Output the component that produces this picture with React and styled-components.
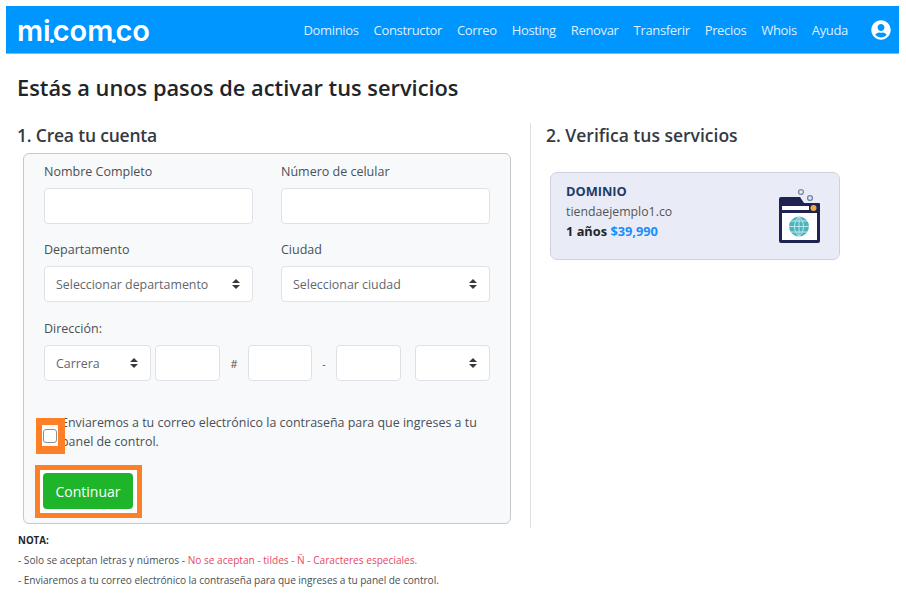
import React from 'react';
import styled, { createGlobalStyle } from 'styled-components';
import { FaUserCircle } from 'react-icons/fa';

const arrows = `url("data:image/svg+xml,%3csvg xmlns='http://www.w3.org/2000/svg' viewBox='0 0 4 5'%3e%3cpath fill='%23343a40' d='M2 0L0 2h4zm0 5L0 3h4z'/%3e%3c/svg%3e")`;

const GlobalStyle = createGlobalStyle`
html, body {
  margin:0;
  background:#fff;
  font-family:"Open Sans", "Noto Sans", sans-serif;
  color:#212529;
}
* { box-sizing:border-box; }
`;

const Page = styled.div`
width:906px;
height:603px;
padding:6px 7px 0 6px;
overflow:hidden;
`;

const NavBar = styled.nav`
height:48px;
background:#0096ff;
border-bottom:1px solid #6cc0ff;
display:flex;
align-items:center;
justify-content:space-between;
padding:0 8px 0 11px;
`;

const Logo = styled.div`
font-family:"Inter", sans-serif;
font-weight:600;
font-size:29px;
color:#fff;
line-height:1;
padding-top:1px;
`;

const LogoDot = styled.span`
display:inline-block;
width:4px;
height:4px;
margin:0 -1px;
border-radius:50%;
background:#fff;
vertical-align:-2px;
`;

const NavRight = styled.div`
display:flex;
align-items:center;
`;

const NavLink = styled.a`
color:rgba(255,255,255,0.88);
font-size:13px;
letter-spacing:-0.34px;
margin-right:15px;
`;

const UserIcon = styled(FaUserCircle)`
color:#fff;
font-size:20px;
margin-left:8px;
`;

const Title = styled.h1`
margin:21px 0 22px 11px;
font-size:21.8px;
line-height:26px;
font-weight:600;
`;

const Columns = styled.div`
display:flex;
margin-left:12px;
`;

const LeftColumn = styled.section`
width:513px;
padding:0 19px 4px 0;
border-right:1px solid #dee2e6;
`;

const RightColumn = styled.section`
flex:1;
padding-left:15px;
`;

const StepTitle = styled.h2`
margin:0 0 0 ${p => p.$shift || '0'};
font-size:17.5px;
letter-spacing:${p => p.$tight ? '-0.2px' : '0'};
line-height:24px;
font-weight:600;
color:#343a40;
`;

const FormCard = styled.form`
position:relative;
margin:6px 0 0 5px;
height:371px;
background:#f8f9fa;
border:1px solid #c8c8c8;
border-radius:6px;
padding:8px 21px 0 20px;
`;

const FieldGrid = styled.div`
display:grid;
grid-template-columns:209px 209px;
column-gap:28px;
row-gap:16px;
`;

const Field = styled.div`
display:flex;
flex-direction:column;
gap:7px;
`;

const Label = styled.label`
padding-top:1px;
font-size:12.5px;
line-height:18px;
color:#495057;
`;

const TextInput = styled.input`
width:${p => p.$width || '100%'};
height:36px;
border:1px solid #dee2e6;
border-radius:4px;
background:#fff;
padding:0 12px;
flex:none;
`;

const Select = styled.select`
appearance:none;
width:${p => p.$width || '100%'};
height:36px;
border:1px solid #dee2e6;
border-radius:4px;
padding:0 11px;
flex:none;
font-family:inherit;
font-size:12.4px;
color:#5f6770;
background:#fff ${arrows} no-repeat right 12px center / 8px 10px;
`;

const AddressBlock = styled.div`
display:flex;
flex-direction:column;
gap:7px;
margin-top:17px;
`;

const AddressRow = styled.div`
display:flex;
align-items:center;
`;

const Separator = styled.span`
width:${p => p.$width}px;
text-align:center;
font-size:11px;
color:#555;
flex:none;
`;

const Terms = styled.p`
margin:32px 0 0 17px;
width:425px;
font-size:12.45px;
line-height:19px;
color:#495057;
`;

const CheckboxMark = styled.span`
position:absolute;
left:12px;
top:264px;
width:29px;
height:36px;
display:flex;
align-items:center;
justify-content:center;
background:#fff;
border:solid #ff7f27;
border-width:7px 7px 8px 6px;
`;

const CheckBox = styled.input`
appearance:none;
margin:0;
width:14px;
height:14px;
border:1px solid #8f8f8f;
border-radius:3px;
background:#fff;
`;

const ButtonMark = styled.div`
width:107px;
margin:14px 0 0 -9px;
padding:3px 4px 4px 3px;
background:#fff;
border:5px solid #ff7f27;
`;

const ContinueButton = styled.button`
display:block;
width:90px;
height:36px;
border:none;
border-radius:4px;
background:#1eb52b;
color:#fff;
font-family:inherit;
font-size:14px;
`;

const ServiceCard = styled.div`
margin:25px 0 0 4px;
width:290px;
height:88px;
background:#e9ecf6;
border:1px solid #cfd2da;
border-radius:7px;
padding:8px 18px 0 15px;
display:flex;
justify-content:space-between;
`;

const ServiceInfo = styled.div`
display:flex;
flex-direction:column;
`;

const ServiceName = styled.strong`
font-size:12.8px;
line-height:20px;
color:#1f3a68;
`;

const ServiceDomain = styled.span`
font-size:12.3px;
line-height:21px;
color:#555;
`;

const ServicePrice = styled.span`
font-size:12.8px;
line-height:19px;
font-weight:700;
`;

const PriceValue = styled.span`
color:#1a8cff;
`;

const DomainGraphic = styled.svg`
margin-top:6px;
flex:none;
`;

const Notes = styled.div`
margin:5px 0 0 12px;
font-size:10.1px;
color:#495057;
`;

const NoteTitle = styled.div`
font-size:9.7px;
font-weight:700;
line-height:16px;
color:#212529;
`;

const NoteLine = styled.div`
line-height:20px;
margin-top:${p => p.$first ? '1px' : '0'};
letter-spacing:${p => p.$first ? '0' : '-0.05px'};
`;

const Warning = styled.span`
color:#e8475f;
`;

const links = ['Dominios', 'Constructor', 'Correo', 'Hosting', 'Renovar', 'Transferir', 'Precios', 'Whois', 'Ayuda'];

function DomainIcon() {
    return (
        <DomainGraphic width="42" height="57" viewBox="0 0 42 57">
            <circle cx="22" cy="5" r="2.4" fill="none" stroke="#7f8fb5" strokeWidth="1.4" />
            <circle cx="31" cy="11" r="2.4" fill="none" stroke="#6f83ad" strokeWidth="1.4" />
            <path d="M2 10h19l4 6h15a1 1 0 0 1 1 1v37a2 2 0 0 1-2 2H2a2 2 0 0 1-2-2V12a2 2 0 0 1 2-2z" fill="#1e2352" />
            <rect x="3" y="19" width="27" height="4" fill="#fff" />
            <circle cx="34.5" cy="21" r="3" fill="#f5a542" />
            <rect x="3" y="26" width="35" height="27" fill="#fff" />
            <circle cx="20" cy="39.5" r="10" fill="#4fb3bf" />
            <path d="M10 39.5h20M12 34h16M12 45h16M20 29.500v20M20 29.500c-6 6-6 14 0 20M20 29.500c6 6 6 14 0 20" fill="none" stroke="#c9eef0" strokeWidth="0.9" />
        </DomainGraphic>
    );
}

export default function App() {
    return (
        <Page>
            <GlobalStyle />
            <NavBar>
                <Logo>mi<LogoDot />com<LogoDot />co</Logo>
                <NavRight>
                    {links.map(l => <NavLink key={l}>{l}</NavLink>)}
                    <UserIcon />
                </NavRight>
            </NavBar>
            <Title>Estás a unos pasos de activar tus servicios</Title>
            <Columns>
                <LeftColumn>
                    <StepTitle $tight $shift="-1px">1. Crea tu cuenta</StepTitle>
                    <FormCard>
                        <FieldGrid>
                            <Field>
                                <Label>Nombre Completo</Label>
                                <TextInput />
                            </Field>
                            <Field>
                                <Label>Número de celular</Label>
                                <TextInput />
                            </Field>
                            <Field>
                                <Label>Departamento</Label>
                                <Select><option>Seleccionar departamento</option></Select>
                            </Field>
                            <Field>
                                <Label>Ciudad</Label>
                                <Select><option>Seleccionar ciudad</option></Select>
                            </Field>
                        </FieldGrid>
                        <AddressBlock>
                            <Label>Dirección:</Label>
                            <AddressRow>
                                <Select $width="107px"><option>Carrera</option></Select>
                                <Separator $width={4} />
                                <TextInput $width="65px" />
                                <Separator $width={28}>#</Separator>
                                <TextInput $width="64px" />
                                <Separator $width={24}>-</Separator>
                                <TextInput $width="65px" />
                                <Separator $width={14} />
                                <Select $width="75px"><option></option></Select>
                            </AddressRow>
                        </AddressBlock>
                        <Terms>Enviaremos a tu correo electrónico la contraseña para que ingreses a tu panel de control.</Terms>
                        <CheckboxMark><CheckBox type="checkbox" /></CheckboxMark>
                        <ButtonMark>
                            <ContinueButton type="button">Continuar</ContinueButton>
                        </ButtonMark>
                    </FormCard>
                </LeftColumn>
                <RightColumn>
                    <StepTitle>2. Verifica tus servicios</StepTitle>
                    <ServiceCard>
                        <ServiceInfo>
                            <ServiceName>DOMINIO</ServiceName>
                            <ServiceDomain>tiendaejemplo1.co</ServiceDomain>
                            <ServicePrice>1 años <PriceValue>$39,990</PriceValue></ServicePrice>
                        </ServiceInfo>
                        <DomainIcon />
                    </ServiceCard>
                </RightColumn>
            </Columns>
            <Notes>
                <NoteTitle>NOTA:</NoteTitle>
                <NoteLine $first>- Solo se aceptan letras y números - <Warning>No se aceptan - tildes - Ñ - Caracteres especiales.</Warning></NoteLine>
                <NoteLine>- Enviaremos a tu correo electrónico la contraseña para que ingreses a tu panel de control.</NoteLine>
            </Notes>
        </Page>
    );
}
